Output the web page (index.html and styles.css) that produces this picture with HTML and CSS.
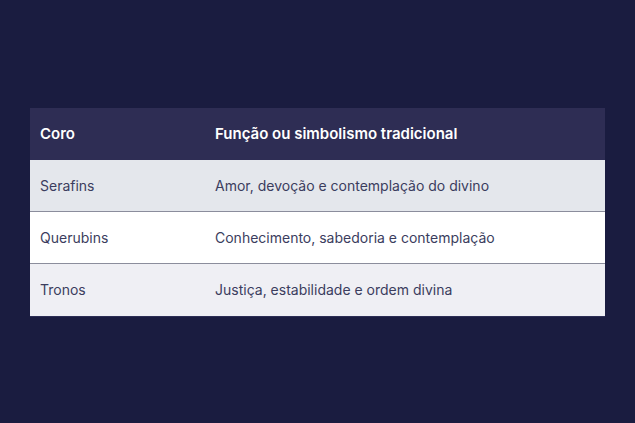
FILE: index.html
```html
<!DOCTYPE html>
<html lang="pt">
<head>
<meta charset="utf-8">
<link rel="stylesheet" href="styles.css">
</head>
<body>
<main class="page">
  <table class="choirs">
    <thead>
      <tr><th class="c1">Coro</th><th>Função ou simbolismo tradicional</th></tr>
    </thead>
    <tbody>
      <tr class="r1"><td>Serafins</td><td>Amor, devoção e contemplação do divino</td></tr>
      <tr class="r2"><td>Querubins</td><td>Conhecimento, sabedoria e contemplação</td></tr>
      <tr class="r3"><td>Tronos</td><td>Justiça, estabilidade e ordem divina</td></tr>
    </tbody>
  </table>
</main>
</body>
</html>
```
FILE: styles.css
```css
html, body {
  margin: 0;
  padding: 0;
  background: #1a1c40;
}
.page {
  width: 635px;
  height: 423px;
  display: flex;
  justify-content: center;
  padding-top: 108px;
  box-sizing: border-box;
  font-family: Inter, "Liberation Sans", sans-serif;
}
.choirs {
  width: 575px;
  border-collapse: collapse;
  font-size: 14px;
  line-height: 21px;
  align-self: flex-start;
}
.choirs th, .choirs td {
  text-align: left;
  padding: 15px 10px;
}
.choirs th {
  background: #2e2d54;
  color: #ffffff;
  font-size: 15px;
  font-weight: 600;
  padding-top: 15px;
  padding-bottom: 16px;
}
.choirs th.c1 { width: 155px; }
.choirs td {
  color: #3b3d5e;
  font-weight: 400;
}
.choirs tbody tr { border-bottom: 1px solid #8b8d9c; }
.choirs tbody tr:last-child { border-bottom: 1px solid #2c2e55; }
.r3 td { padding-bottom: 16px; }
.r1 td { background: #e4e7ec; }
.r2 td { background: #ffffff; }
.r3 td { background: #efeff4; }
```
